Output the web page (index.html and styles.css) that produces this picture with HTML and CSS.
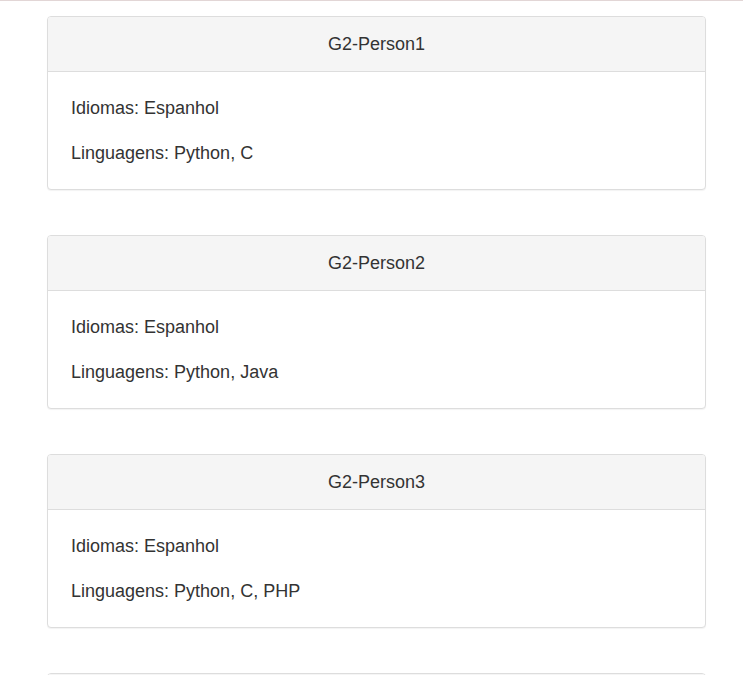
FILE: index.html
```html
<!DOCTYPE html>
<html>
<head>
<meta charset="utf-8">
<link rel="stylesheet" href="styles.css">
</head>
<body>
<div class="topline"></div>
<main class="list">
  <section class="panel">
    <div class="panel-heading">G2-Person1</div>
    <div class="panel-body">
      <p>Idiomas: Espanhol</p>
      <p>Linguagens: Python, C</p>
    </div>
  </section>
  <section class="panel">
    <div class="panel-heading">G2-Person2</div>
    <div class="panel-body">
      <p>Idiomas: Espanhol</p>
      <p>Linguagens: Python, Java</p>
    </div>
  </section>
  <section class="panel">
    <div class="panel-heading">G2-Person3</div>
    <div class="panel-body">
      <p>Idiomas: Espanhol</p>
      <p>Linguagens: Python, C, PHP</p>
    </div>
  </section>
  <section class="panel">
    <div class="panel-heading">G2-Person4</div>
    <div class="panel-body">
      <p>Idiomas: Espanhol</p>
      <p>Linguagens: Python</p>
    </div>
  </section>
</main>
</body>
</html>
```
FILE: styles.css
```css
html, body {
  margin: 0;
  padding: 0;
  background: #fff;
}
body {
  font-family: "Liberation Sans", Arial, sans-serif;
  font-size: 18px;
  color: #333;
}
.topline {
  height: 1px;
  background: #e2d6d6;
}
.list {
  display: flex;
  flex-direction: column;
  gap: 45px;
  margin: 15px 37px 0 47px;
}
.panel {
  border: 1px solid #ddd;
  border-radius: 4px;
  box-shadow: 0 1px 1px rgba(0,0,0,.05);
  background: #fff;
}
.panel-heading {
  background: #f5f5f5;
  border-bottom: 1px solid #ddd;
  border-radius: 3px 3px 0 0;
  height: 54px;
  line-height: 54px;
  text-align: center;
  color: #333;
}
.panel-body {
  padding: 23px 23px 23px 23px;
  display: flex;
  flex-direction: column;
  gap: 19px;
}
.panel-body p {
  margin: 0;
  line-height: 26px;
}
```
